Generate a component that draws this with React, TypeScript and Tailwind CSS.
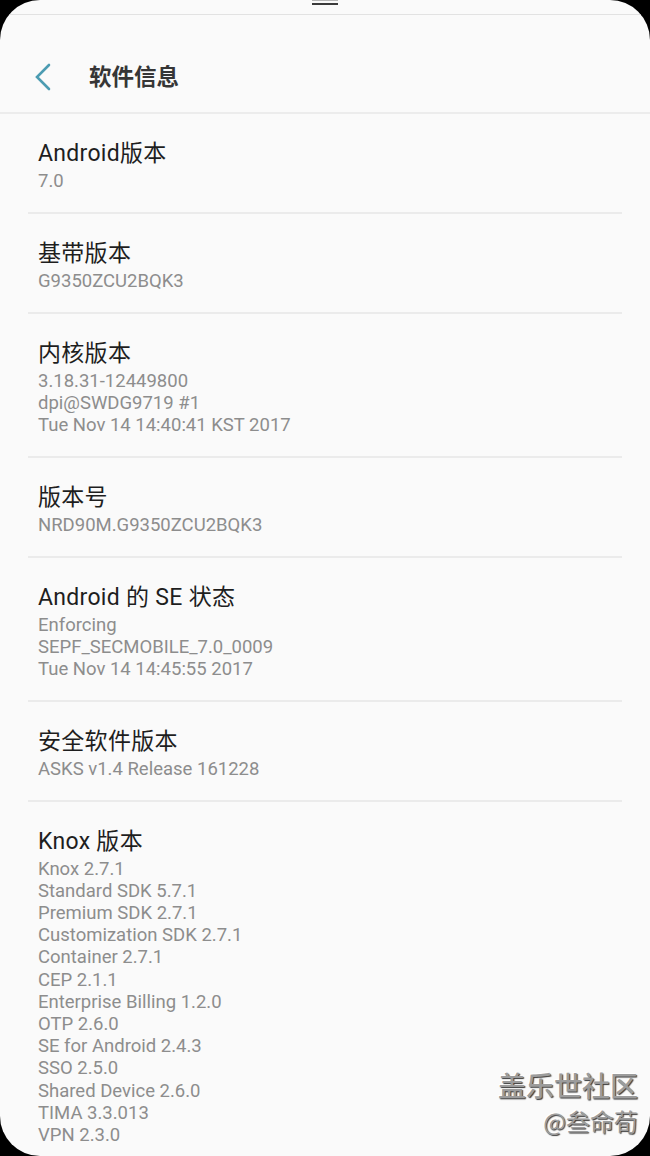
import React from "react";

const font = { fontFamily: "Roboto, 'Noto Sans CJK SC', sans-serif" };

const rows: { title: string; lines: string[] }[] = [
  { title: "Android版本", lines: ["7.0"] },
  { title: "基带版本", lines: ["G9350ZCU2BQK3"] },
  {
    title: "内核版本",
    lines: ["3.18.31-12449800", "dpi@SWDG9719 #1", "Tue Nov 14 14:40:41 KST 2017"],
  },
  { title: "版本号", lines: ["NRD90M.G9350ZCU2BQK3"] },
  {
    title: "Android 的 SE 状态",
    lines: ["Enforcing", "SEPF_SECMOBILE_7.0_0009", "Tue Nov 14 14:45:55 2017"],
  },
  { title: "安全软件版本", lines: ["ASKS v1.4 Release 161228"] },
  {
    title: "Knox 版本",
    lines: [
      "Knox 2.7.1",
      "Standard SDK 5.7.1",
      "Premium SDK 2.7.1",
      "Customization SDK 2.7.1",
      "Container 2.7.1",
      "CEP 2.1.1",
      "Enterprise Billing 1.2.0",
      "OTP 2.6.0",
      "SE for Android 2.4.3",
      "SSO 2.5.0",
      "Shared Device 2.6.0",
      "TIMA 3.3.013",
      "VPN 2.3.0",
    ],
  },
];

export default function App() {
  return (
    <div className="w-[650px] h-[1156px] bg-black overflow-hidden" style={font}>
      <div className="relative h-full rounded-[40px] bg-[#fafafa] overflow-hidden flex flex-col">
        {/* pull-down handle */}
        <div className="h-[15px] shrink-0 flex flex-col items-center border-b border-[#e2e2e2]">
          <div className="w-[26px] h-px bg-[#b5b5b5]" />
          <div className="w-[26px] h-[2px] mt-[2px] bg-[#3a3a3a]" />
        </div>

        {/* header */}
        <div className="h-[99px] shrink-0 pt-[47px] border-b-2 border-[#ececec]">
          <div className="h-[30px] flex items-center">
            <svg width="18" height="28" viewBox="0 0 18 28" className="ml-[34px]">
              <path d="M15 2 L3 14 L15 26" fill="none" stroke="#4c9cb2" strokeWidth="2.6" strokeLinecap="round" />
            </svg>
            <span className="ml-[37px] text-[22.5px] leading-[30px] font-bold text-[#363636]">软件信息</span>
          </div>
        </div>

        {/* rows */}
        <div className="flex flex-col">
          {rows.map((row, i) => (
            <div key={i}>
              {i > 0 && <div className="mx-[28px] h-[2px] bg-[#ebebeb]" />}
              <div className="pl-[38px] pt-[25px] pb-[19.6px]">
                <div className="text-[23px] leading-[30px] tracking-[0.3px] text-[#1e1e1e]">{row.title}</div>
                <div className="mt-[1px]">
                  {row.lines.map((l, j) => (
                    <div key={j} className="text-[18.5px] leading-[22.2px] text-[#8d8d8d]">
                      {l}
                    </div>
                  ))}
                </div>
              </div>
            </div>
          ))}
        </div>

        {/* watermark */}
        <div className="absolute right-[12px] top-[1066px] flex flex-col items-end font-['Noto_Sans_CJK_SC',sans-serif]">
          <span className="text-[28px] leading-[38px] font-medium text-[#9c9c9c] [text-shadow:1px_1px_1px_#3a3a3a,-1px_-1px_0_#ffffff]">
            盖乐世社区
          </span>
          <span className="mt-[2px] text-[24px] leading-[30px] text-[#9c9c9c] [text-shadow:1px_1px_1px_#3a3a3a,-1px_-1px_0_#ffffff]">
            @叁命荀
          </span>
        </div>
      </div>
    </div>
  );
}
